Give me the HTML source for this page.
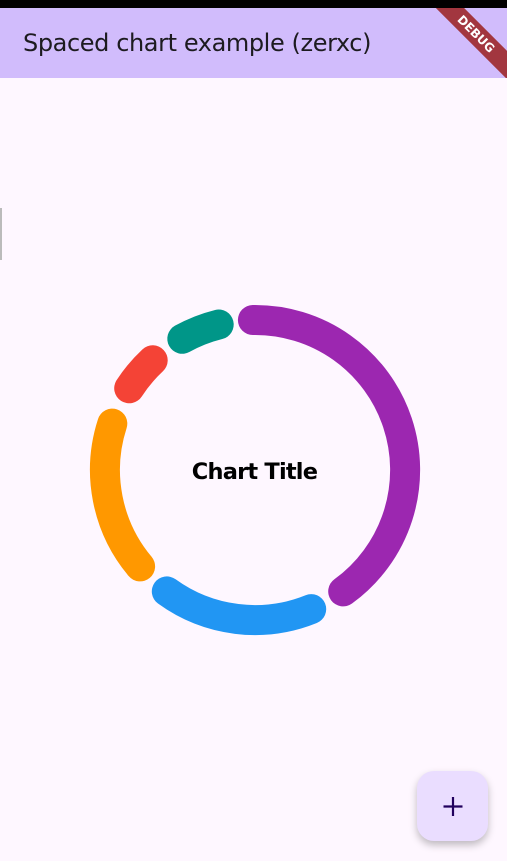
<!DOCTYPE html>
<html><head><meta charset="utf-8"><style>
html,body{margin:0;padding:0;width:507px;height:861px;overflow:hidden;background:#fef7ff;font-family:"Liberation Sans",sans-serif;position:relative}
.top{position:absolute;left:0;top:0;width:507px;height:8px;background:#000}
.bar{position:absolute;left:0;top:8px;width:507px;height:70px;background:#d1bcfc}
.bar span{position:absolute;left:23px;top:21px;font-size:24px;color:#1d1b20;font-family:"DejaVu Sans","Liberation Sans",sans-serif;font-weight:normal;letter-spacing:-0.4px}
.ribbon{position:absolute;right:-34px;top:16px;width:130px;height:20px;background:#a2363f;transform:rotate(45deg);color:#fff;font-size:12px;font-weight:bold;text-align:center;line-height:20px;font-family:"DejaVu Sans",sans-serif}
.fab{position:absolute;left:417px;top:771px;width:71px;height:70px;border-radius:17px;background:#eaddff;box-shadow:0 4px 8px rgba(0,0,0,.25)}
.title{position:absolute;left:1px;width:507px;top:459px;text-align:center;font-weight:bold;font-size:22.5px;color:#000;font-family:"DejaVu Sans","Liberation Sans",sans-serif;letter-spacing:-0.8px}
</style></head><body>
<div class="top"></div>
<div class="bar"><span>Spaced chart example (zerxc)</span></div>
<div style="position:absolute;left:0;top:8px;width:507px;height:70px;overflow:hidden"><div class="ribbon">DEBUG</div></div>
<div style="position:absolute;left:0;top:208px;width:2px;height:52px;background:#bbb"></div>
<svg width="507" height="861" style="position:absolute;left:0;top:0" fill="none" stroke-width="30" stroke-linecap="round">
<path d="M252.9 320 A150 150 0 0 1 343.2 591.4" stroke="#9c27b0"/>
<path d="M311.2 609.1 A150 150 0 0 1 166.8 591.4" stroke="#2196f3"/>
<path d="M140.1 566.4 A150 150 0 0 1 112.3 423.6" stroke="#ff9800"/>
<path d="M129.2 388.3 A150 150 0 0 1 152.7 360.3" stroke="#f44336"/>
<path d="M182.3 338.8 A150 150 0 0 1 218.7 324.5" stroke="#009688"/>
</svg>
<div class="title">Chart Title</div>
<div class="fab"><svg width="71" height="70"><path d="M36 26v19M26.5 35.5h19" stroke="#21005d" stroke-width="2.2"/></svg></div>
</body></html>
